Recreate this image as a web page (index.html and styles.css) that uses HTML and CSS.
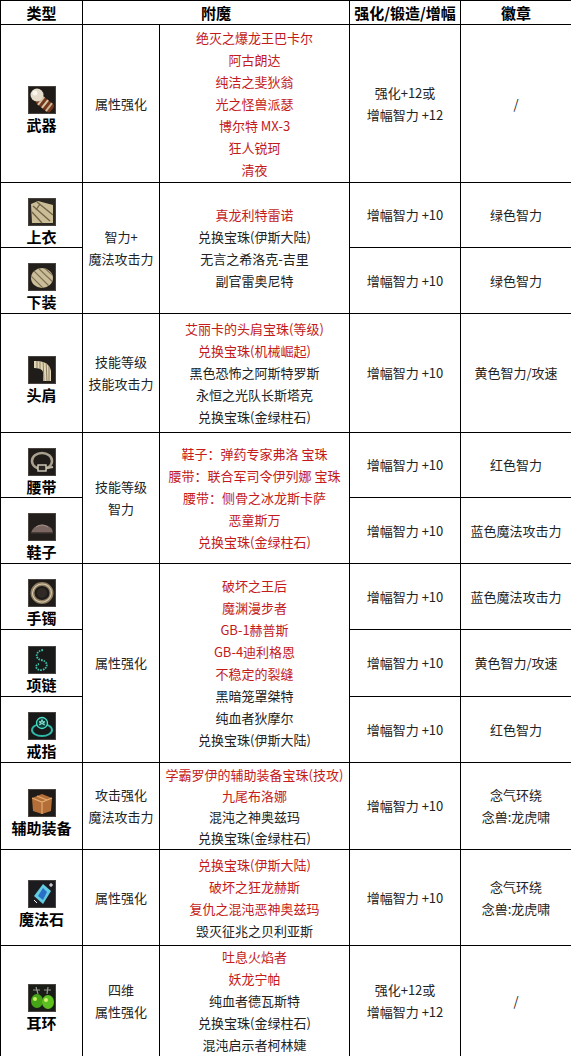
FILE: index.html
```html
<!DOCTYPE html>
<html lang="zh-CN">
<head>
<meta charset="utf-8">
<title>装备附魔</title>
<link rel="stylesheet" href="styles.css">
</head>
<body>
<table class="gear">
  <colgroup>
    <col class="c-type"><col class="c-attr"><col class="c-ench"><col class="c-up"><col class="c-badge">
  </colgroup>
  <thead>
    <tr class="r-head"><th>类型</th><th colspan="2">附魔</th><th>强化/锻造/增幅</th><th>徽章</th></tr>
  </thead>
  <tbody>
    <tr class="r-weapon">
      <td class="type"><div class="item">
        <svg class="ico" viewBox="0 0 28 28"><rect x=".5" y=".5" width="27" height="27" fill="#1f1b18" stroke="#4a4440"/><g transform="rotate(38 17 18)"><rect x="8" y="13" width="18" height="10" rx="3" fill="#74381b"/><rect x="11" y="13" width="2" height="10" fill="#d8c6a8"/><rect x="16" y="13" width="2" height="10" fill="#d8c6a8"/><rect x="21" y="13" width="2" height="10" fill="#cdb596"/></g><circle cx="9" cy="9" r="6.5" fill="#e6dccb"/><circle cx="7" cy="7" r="2.5" fill="#fff" opacity=".7"/></svg>
        <span class="name">武器</span></div></td>
      <td>属性强化</td>
      <td class="ench">
        <div class="red">绝灭之爆龙王巴卡尔</div>
        <div class="red">阿古朗达</div>
        <div class="red">纯洁之斐狄翁</div>
        <div class="red">光之怪兽派瑟</div>
        <div class="red">博尔特 MX-3</div>
        <div class="red">狂人锐珂</div>
        <div class="red">清夜</div>
      </td>
      <td><div>强化+12或</div><div>增幅智力 +12</div></td>
      <td>/</td>
    </tr>
    <tr class="r-top">
      <td class="type"><div class="item">
        <svg class="ico" viewBox="0 0 28 28"><rect x=".5" y=".5" width="27" height="27" fill="#2a2620" stroke="#4a4440"/><path d="M3 6 L10 3 L25 7 L25 25 L4 25 Z" fill="#cbbd96"/><path d="M5 8 L22 23 M9 4 L25 17 M4 14 L14 25 M12 6 L8 12" stroke="#6f6347" stroke-width="1.3" fill="none"/></svg>
        <span class="name">上衣</span></div></td>
      <td rowspan="2"><div>智力+</div><div>魔法攻击力</div></td>
      <td class="ench" rowspan="2">
        <div class="red">真龙利特雷诺</div>
        <div>兑换宝珠(伊斯大陆)</div>
        <div>无言之希洛克-吉里</div>
        <div>副官雷奥尼特</div>
      </td>
      <td>增幅智力 +10</td>
      <td>绿色智力</td>
    </tr>
    <tr class="r-bottom">
      <td class="type"><div class="item">
        <svg class="ico" viewBox="0 0 28 28"><defs><clipPath id="cpb"><ellipse cx="14" cy="15" rx="11" ry="10"/></clipPath></defs><rect x=".5" y=".5" width="27" height="27" fill="#231f1b" stroke="#4a4440"/><ellipse cx="14" cy="15" rx="11" ry="10" fill="#cbbd98"/><g clip-path="url(#cpb)" stroke="#7d7155" stroke-width="1.2"><path d="M0 10 L16 26 M3 5 L22 24 M8 3 L26 20 M14 3 L28 15"/></g></svg>
        <span class="name">下装</span></div></td>
      <td>增幅智力 +10</td>
      <td>绿色智力</td>
    </tr>
    <tr class="r-shoulder">
      <td class="type"><div class="item">
        <svg class="ico" viewBox="0 0 28 28"><defs><clipPath id="cps"><path d="M6 5 Q21 4 23 15 L23 25 L15 25 L15 16 Q14 12 6 12 Z"/></clipPath></defs><rect x=".5" y=".5" width="27" height="27" fill="#201c19" stroke="#4a4440"/><path d="M6 5 Q21 4 23 15 L23 25 L15 25 L15 16 Q14 12 6 12 Z" fill="#e2d6b5"/><g clip-path="url(#cps)" stroke="#8a7d60" stroke-width="1"><path d="M9 3 L9 14 M12 3 L12 14 M15 3 L16 26 M18 3 L19 26 M21 5 L21 26"/></g></svg>
        <span class="name">头肩</span></div></td>
      <td><div>技能等级</div><div>技能攻击力</div></td>
      <td class="ench">
        <div class="red">艾丽卡的头肩宝珠(等级)</div>
        <div class="red">兑换宝珠(机械崛起)</div>
        <div>黑色恐怖之阿斯特罗斯</div>
        <div>永恒之光队长斯塔克</div>
        <div>兑换宝珠(金绿柱石)</div>
      </td>
      <td>增幅智力 +10</td>
      <td>黄色智力/攻速</td>
    </tr>
    <tr class="r-belt">
      <td class="type"><div class="item">
        <svg class="ico" viewBox="0 0 28 28"><rect x=".5" y=".5" width="27" height="27" fill="#1f1c1a" stroke="#4a4440"/><ellipse cx="14" cy="13" rx="10" ry="8" fill="none" stroke="#a9a08e" stroke-width="2.5"/><rect x="10" y="17" width="8" height="6" fill="#2a2622" stroke="#d6cebe" stroke-width="1.4"/><path d="M19 20 L25 19" stroke="#bdb4a2" stroke-width="2"/></svg>
        <span class="name">腰带</span></div></td>
      <td rowspan="2"><div>技能等级</div><div>智力</div></td>
      <td class="ench" rowspan="2">
        <div class="red">鞋子：弹药专家弗洛 宝珠</div>
        <div class="red">腰带：联合军司令伊列娜 宝珠</div>
        <div class="red">腰带：侧骨之冰龙斯卡萨</div>
        <div class="red">恶童斯万</div>
        <div class="red">兑换宝珠(金绿柱石)</div>
      </td>
      <td>增幅智力 +10</td>
      <td>红色智力</td>
    </tr>
    <tr class="r-shoes">
      <td class="type"><div class="item">
        <svg class="ico" viewBox="0 0 28 28"><rect x=".5" y=".5" width="27" height="27" fill="#221e1c" stroke="#4a4440"/><path d="M3 20 Q5 13 12 12 Q19 11 24 16 L25 20 Z" fill="#7a6761"/><path d="M8 14 Q14 10 20 14" stroke="#a8928a" stroke-width="1" fill="none"/><path d="M3 20 L25 20" stroke="#3a302c" stroke-width="1.5"/></svg>
        <span class="name">鞋子</span></div></td>
      <td>增幅智力 +10</td>
      <td>蓝色魔法攻击力</td>
    </tr>
    <tr class="r-bracelet">
      <td class="type"><div class="item">
        <svg class="ico" viewBox="0 0 28 28"><rect x=".5" y=".5" width="27" height="27" fill="#1e1b19" stroke="#4a4440"/><ellipse cx="14" cy="14" rx="9.5" ry="9" fill="none" stroke="#8f7d5f" stroke-width="4"/><ellipse cx="14" cy="14" rx="9.5" ry="9" fill="none" stroke="#d9cdb3" stroke-width="1" transform="rotate(-20 14 14)"/><ellipse cx="14" cy="14" rx="5" ry="5" fill="#2f2a26"/></svg>
        <span class="name">手镯</span></div></td>
      <td rowspan="3">属性强化</td>
      <td class="ench" rowspan="3">
        <div class="red">破坏之王后</div>
        <div class="red">魔渊漫步者</div>
        <div class="red">GB-1赫普斯</div>
        <div class="red">GB-4迪利格恩</div>
        <div class="red">不稳定的裂缝</div>
        <div>黑暗笼罩桀特</div>
        <div>纯血者狄摩尔</div>
        <div>兑换宝珠(伊斯大陆)</div>
      </td>
      <td>增幅智力 +10</td>
      <td>蓝色魔法攻击力</td>
    </tr>
    <tr class="r-necklace">
      <td class="type"><div class="item">
        <svg class="ico" viewBox="0 0 28 28"><rect x=".5" y=".5" width="27" height="27" fill="#171a19" stroke="#4a4440"/><path d="M15 4 C7 5 7 13 13 14 C20 15 21 22 14 24 C8 25 6 19 11 18" fill="none" stroke="#3cc0a8" stroke-width="1.8" stroke-dasharray="1.6 1"/></svg>
        <span class="name">项链</span></div></td>
      <td>增幅智力 +10</td>
      <td>黄色智力/攻速</td>
    </tr>
    <tr class="r-ring">
      <td class="type"><div class="item">
        <svg class="ico" viewBox="0 0 28 28"><rect x=".5" y=".5" width="27" height="27" fill="#161918" stroke="#4a4440"/><ellipse cx="14" cy="18" rx="10" ry="6" fill="none" stroke="#2fb8a8" stroke-width="2"/><circle cx="14" cy="11" r="5.5" fill="#0f3a36" stroke="#4ee0cc" stroke-width="1.3"/><path d="M14 7.5 L16.5 13 L11 9.8 L17 9.8 L11.5 13 Z" fill="none" stroke="#8ff5e4" stroke-width=".8"/></svg>
        <span class="name">戒指</span></div></td>
      <td>增幅智力 +10</td>
      <td>红色智力</td>
    </tr>
    <tr class="r-support">
      <td class="type"><div class="item">
        <svg class="ico" viewBox="0 0 28 28"><rect x=".5" y=".5" width="27" height="27" fill="#1f1b18" stroke="#4a4440"/><path d="M4 9 L14 5 L24 9 L23 22 L14 25 L5 22 Z" fill="#b36f37"/><path d="M4 9 L14 13 L24 9 M14 13 L14 25 M9 7 L19 11" stroke="#e3ad74" stroke-width="1.2" fill="none"/></svg>
        <span class="name">辅助装备</span></div></td>
      <td><div>攻击强化</div><div>魔法攻击力</div></td>
      <td class="ench tight">
        <div class="red">学霸罗伊的辅助装备宝珠(技攻)</div>
        <div class="red">九尾布洛娜</div>
        <div>混沌之神奥兹玛</div>
        <div>兑换宝珠(金绿柱石)</div>
      </td>
      <td>增幅智力 +10</td>
      <td><div>念气环绕</div><div>念兽:龙虎啸</div></td>
    </tr>
    <tr class="r-stone">
      <td class="type"><div class="item">
        <svg class="ico" viewBox="0 0 28 28"><rect x=".5" y=".5" width="27" height="27" fill="#1c1c20" stroke="#4a4440"/><polygon points="15,4 23,11 15,24 6,16" fill="#62cde0"/><polygon points="15,8 19,12 15,20 10,16" fill="#2a6fc8"/><path d="M21 5 L25 5 M23 3 L23 7 M6 20 L9 23" stroke="#fff" stroke-width="1"/></svg>
        <span class="name">魔法石</span></div></td>
      <td>属性强化</td>
      <td class="ench">
        <div class="red">兑换宝珠(伊斯大陆)</div>
        <div class="red">破坏之狂龙赫斯</div>
        <div class="red">复仇之混沌恶神奥兹玛</div>
        <div>毁灭征兆之贝利亚斯</div>
      </td>
      <td>增幅智力 +10</td>
      <td><div>念气环绕</div><div>念兽:龙虎啸</div></td>
    </tr>
    <tr class="r-earring">
      <td class="type"><div class="item">
        <svg class="ico" viewBox="0 0 28 28"><rect x=".5" y=".5" width="27" height="27" fill="#1a1c18" stroke="#4a4440"/><path d="M8 3 L10 10 M20 3 L19 10 M5 6 L12 6 M16 6 L23 6" stroke="#9a9a90" stroke-width="1.2"/><ellipse cx="9" cy="17" rx="6" ry="7" fill="#46a516"/><ellipse cx="20" cy="18" rx="6" ry="7" fill="#5cc020"/><circle cx="7" cy="15" r="2" fill="#c8f060"/><circle cx="18" cy="16" r="2" fill="#d6f070"/></svg>
        <span class="name">耳环</span></div></td>
      <td><div>四维</div><div>属性强化</div></td>
      <td class="ench">
        <div class="red">吐息火焰者</div>
        <div class="red">妖龙宁帕</div>
        <div>纯血者德瓦斯特</div>
        <div>兑换宝珠(金绿柱石)</div>
        <div>混沌启示者柯林婕</div>
      </td>
      <td><div>强化+12或</div><div>增幅智力 +12</div></td>
      <td>/</td>
    </tr>
  </tbody>
</table>
</body>
</html>
```

FILE: styles.css
```css
* { box-sizing: border-box; }

html, body {
  margin: 0;
  padding: 0;
  background: #ffffff;
}

body {
  font-family: "Noto Sans CJK SC", "Microsoft YaHei", sans-serif;
  font-size: 13px;
  color: #222;
}

.gear {
  border-collapse: collapse;
  table-layout: fixed;
  width: 571px;
}

.c-type { width: 82px; }
.c-attr { width: 77px; }
.c-ench { width: 190px; }
.c-up { width: 111px; }
.c-badge { width: 111px; }

.gear th,
.gear td {
  border: 1px solid #000;
  padding: 0;
  text-align: center;
  vertical-align: middle;
  line-height: 22px;
  white-space: nowrap;
}

.gear th {
  font-size: 15px;
  font-weight: bold;
  line-height: 20px;
  color: #000;
}

.gear td.type {
  padding-top: 12px;
}

.item {
  display: flex;
  flex-direction: column;
  align-items: center;
}

.ico {
  display: block;
  width: 28px;
  height: 28px;
  margin-bottom: 3px;
}

.name {
  font-size: 15px;
  font-weight: bold;
  line-height: 16px;
  color: #000;
}

.red { color: #c41a1a; }

.ench.tight { line-height: 21px; }

.r-head { height: 24px; }
.r-weapon { height: 158px; }
.r-top { height: 65px; }
.r-bottom { height: 66px; }
.r-shoulder { height: 119px; }
.r-belt { height: 65px; }
.r-shoes { height: 66px; }
.r-bracelet { height: 66px; }
.r-necklace { height: 67px; }
.r-ring { height: 66px; }
.r-support { height: 87px; }
.r-stone { height: 96px; }
.r-earring { height: 110px; }
```
